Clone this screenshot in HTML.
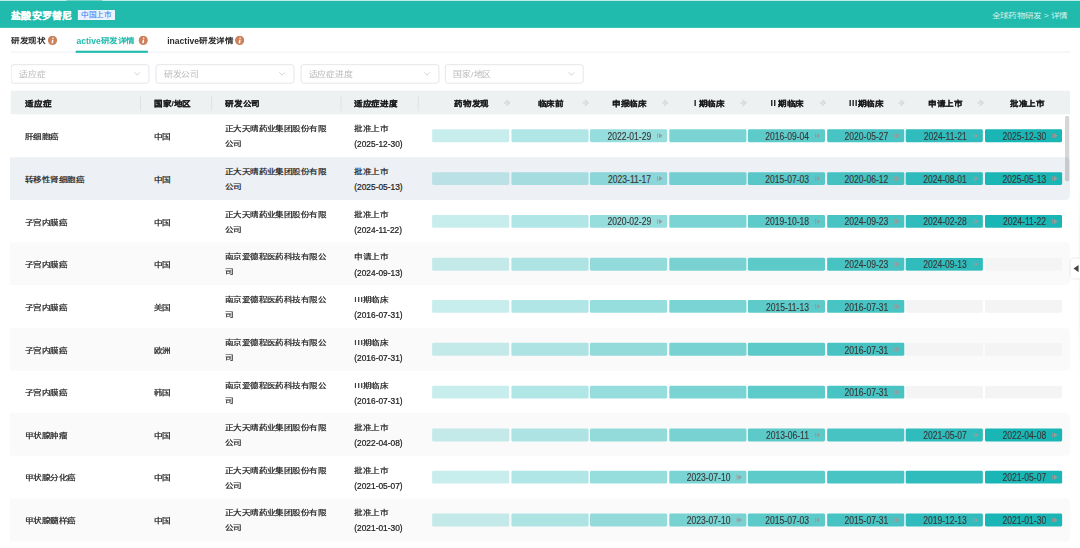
<!DOCTYPE html><html lang="zh-CN"><head><meta charset="utf-8"><style>
*{box-sizing:border-box;margin:0;padding:0}
html,body{width:1080px;height:548px;overflow:hidden;background:#fff}
body{font-family:"Liberation Sans",sans-serif;color:#333}
#root{position:absolute;left:0;top:0;width:1512px;height:768px;transform:scale(0.7142857142857143);transform-origin:0 0;overflow:hidden}
.a{position:absolute;white-space:nowrap}
.hdr{left:0;top:1.4px;width:1512px;height:37.8px;background:rgb(32,187,172)}
.topseg{left:92.75px;top:0;width:50px;height:1.4px;background:#6fd0c6}
.title{left:15.5px;top:12.2px;font-size:14px;font-weight:bold;color:#fff;line-height:20px;letter-spacing:0.35px;-webkit-text-stroke:0.3px #fff}
.badge{left:109.2px;top:14px;height:13.7px;width:51.8px;background:#ebf1fd;color:#3d85f5;font-size:10.6px;-webkit-text-stroke:0.15px #3d85f5;line-height:13.7px;text-align:center}
.badge span{display:inline-block;transform:scaleY(0.86);transform-origin:50% 55%}
.crumb{right:17.5px;top:13.5px;font-size:12px;letter-spacing:-0.3px;color:rgba(255,255,255,.82);line-height:16px}
.tab{top:48.9px;font-size:12px;font-weight:bold;line-height:16px;color:#2b2b2b}
.tab.on{color:rgb(32,187,172)}
.info{width:12.6px;height:12.6px;border-radius:50%;background:#c9835c;color:#fff;font-size:9px;font-weight:bold;text-align:center;line-height:12.6px;font-family:"Liberation Serif",serif}
.tabline{left:15.4px;top:71.6px;width:1482.6px;height:2px;background:#f2f4f7}
.tabul{left:106.4px;top:71.3px;width:100.4px;height:2.4px;background:rgb(32,187,172)}
.sel{top:90.2px;width:194px;height:27px;border:1px solid #d9dce3;border-radius:4px;background:#fff}
.sel span{position:absolute;left:10.5px;top:5px;font-size:12.4px;letter-spacing:0.3px;line-height:16px;color:#bdbdbd;-webkit-text-stroke:0.1px #bdbdbd}
.sel svg{position:absolute;right:11px;top:9px}
.thead{left:15.4px;top:126.6px;width:1482.6px;height:33px;background:#edf1f2}
.th{top:136.9px;font-size:12px;font-weight:bold;line-height:16px;color:#1a1a1a;-webkit-text-stroke:0.2px #1a1a1a}
.sep{top:134px;width:1.4px;height:20.6px;background:#d9dde0}
.row{left:14.2px;width:1483.8px;border-radius:0 6px 6px 0}
.td{font-size:12px;line-height:21px;color:#222;letter-spacing:-0.15px;-webkit-text-stroke:0.35px #222}
.cj{transform:scaleY(0.86);transform-origin:0 55%}
.cjs{display:inline-block;transform:scaleY(0.86);transform-origin:0 55%}
.bar{height:18px;border-radius:2px}
.bar .d{position:absolute;right:22.5px;top:1.5px;font-size:14px;line-height:16px;color:#383838;-webkit-text-stroke:0.2px #383838;transform:scaleX(0.855);transform-origin:100% 50%}
.bar svg{position:absolute;right:6.2px;top:5px}
</style></head><body><div id="root"><div class="a topseg"></div>
<div class="a hdr"></div>
<div class="a title cj">盐酸安罗替尼</div>
<div class="a badge"><span>中国上市</span></div>
<div class="a crumb cj">全球药物研发 &gt; 详情</div>
<div class="a tab" style="left:15.6px"><span class="cjs">研发现状</span></div>
<div class="a" style="left:66.8px;top:50.4px;line-height:0"><svg width="13" height="13" viewBox="0 0 13 13"><circle cx="6.5" cy="6.5" r="6.5" fill="#cd825c"/><circle cx="7.1" cy="3.6" r="1.1" fill="#fff"/><path d="M5.8 5.5 L7.8 5.5 L7.3 10.4 L5.1 10.4 Z" fill="#fff"/></svg></div>
<div class="a tab on" style="left:107.0px">active<span class="cjs">研发详情</span></div>
<div class="a" style="left:193.9px;top:50.4px;line-height:0"><svg width="13" height="13" viewBox="0 0 13 13"><circle cx="6.5" cy="6.5" r="6.5" fill="#cd825c"/><circle cx="7.1" cy="3.6" r="1.1" fill="#fff"/><path d="M5.8 5.5 L7.8 5.5 L7.3 10.4 L5.1 10.4 Z" fill="#fff"/></svg></div>
<div class="a tab" style="left:234.0px">inactive<span class="cjs">研发详情</span></div>
<div class="a" style="left:329px;top:50.4px;line-height:0"><svg width="13" height="13" viewBox="0 0 13 13"><circle cx="6.5" cy="6.5" r="6.5" fill="#cd825c"/><circle cx="7.1" cy="3.6" r="1.1" fill="#fff"/><path d="M5.8 5.5 L7.8 5.5 L7.3 10.4 L5.1 10.4 Z" fill="#fff"/></svg></div>
<div class="a tabline"></div>
<div class="a tabul"></div>
<div class="a sel" style="left:15.4px"><span class="cj">适应症</span><svg width="10" height="7" viewBox="0 0 10 7"><path d="M1 1.2 L5 5.2 L9 1.2" fill="none" stroke="#c8c8c8" stroke-width="1.1"/></svg></div>
<div class="a sel" style="left:218.0px"><span class="cj">研发公司</span><svg width="10" height="7" viewBox="0 0 10 7"><path d="M1 1.2 L5 5.2 L9 1.2" fill="none" stroke="#c8c8c8" stroke-width="1.1"/></svg></div>
<div class="a sel" style="left:420.59999999999997px"><span class="cj">适应症进度</span><svg width="10" height="7" viewBox="0 0 10 7"><path d="M1 1.2 L5 5.2 L9 1.2" fill="none" stroke="#c8c8c8" stroke-width="1.1"/></svg></div>
<div class="a sel" style="left:623.1999999999999px"><span class="cj">国家/地区</span><svg width="10" height="7" viewBox="0 0 10 7"><path d="M1 1.2 L5 5.2 L9 1.2" fill="none" stroke="#c8c8c8" stroke-width="1.1"/></svg></div>
<div class="a thead"></div>
<div class="a th cj" style="left:35.6px">适应症</div>
<div class="a th cj" style="left:216px">国家/地区</div>
<div class="a th cj" style="left:315.5px">研发公司</div>
<div class="a th cj" style="left:496px">适应症进度</div>
<div class="a sep" style="left:195.70000000000002px"></div>
<div class="a sep" style="left:295.7px"></div>
<div class="a sep" style="left:477.1px"></div>
<div class="a sep" style="left:585.0999999999999px"></div>
<div class="a th cj" style="left:600.2px;width:120px;text-align:center">药物发现</div>
<div class="a" style="left:704.8px;top:139.2px;line-height:0"><svg width="10" height="10" viewBox="0 0 10 10"><path d="M3.6 1 L8.4 5 L3.6 9" fill="none" stroke="#d2d4d6" stroke-width="1.5"/><path d="M0.6 5 L6 5" fill="none" stroke="#d2d4d6" stroke-width="1.5"/></svg></div>
<div class="a th cj" style="left:710.7px;width:120px;text-align:center">临床前</div>
<div class="a" style="left:815.3px;top:139.2px;line-height:0"><svg width="10" height="10" viewBox="0 0 10 10"><path d="M3.6 1 L8.4 5 L3.6 9" fill="none" stroke="#d2d4d6" stroke-width="1.5"/><path d="M0.6 5 L6 5" fill="none" stroke="#d2d4d6" stroke-width="1.5"/></svg></div>
<div class="a th cj" style="left:821.2px;width:120px;text-align:center">申报临床</div>
<div class="a" style="left:925.8px;top:139.2px;line-height:0"><svg width="10" height="10" viewBox="0 0 10 10"><path d="M3.6 1 L8.4 5 L3.6 9" fill="none" stroke="#d2d4d6" stroke-width="1.5"/><path d="M0.6 5 L6 5" fill="none" stroke="#d2d4d6" stroke-width="1.5"/></svg></div>
<div class="a th" style="left:932.9000000000001px;width:120px;text-align:center"><span style="letter-spacing:0.8px"></span>I<span style="display:inline-block;width:3.2px"></span><span class="cjs">期临床</span></div>
<div class="a" style="left:1036.3000000000002px;top:139.2px;line-height:0"><svg width="10" height="10" viewBox="0 0 10 10"><path d="M3.6 1 L8.4 5 L3.6 9" fill="none" stroke="#d2d4d6" stroke-width="1.5"/><path d="M0.6 5 L6 5" fill="none" stroke="#d2d4d6" stroke-width="1.5"/></svg></div>
<div class="a th" style="left:1042.2px;width:120px;text-align:center"><span style="letter-spacing:0.8px">I</span>I<span style="display:inline-block;width:3.2px"></span><span class="cjs">期临床</span></div>
<div class="a" style="left:1146.8000000000002px;top:139.2px;line-height:0"><svg width="10" height="10" viewBox="0 0 10 10"><path d="M3.6 1 L8.4 5 L3.6 9" fill="none" stroke="#d2d4d6" stroke-width="1.5"/><path d="M0.6 5 L6 5" fill="none" stroke="#d2d4d6" stroke-width="1.5"/></svg></div>
<div class="a th" style="left:1152.7px;width:120px;text-align:center"><span style="letter-spacing:0.8px">II</span>I<span style="display:inline-block;width:0.6px"></span><span class="cjs">期临床</span></div>
<div class="a" style="left:1257.3000000000002px;top:139.2px;line-height:0"><svg width="10" height="10" viewBox="0 0 10 10"><path d="M3.6 1 L8.4 5 L3.6 9" fill="none" stroke="#d2d4d6" stroke-width="1.5"/><path d="M0.6 5 L6 5" fill="none" stroke="#d2d4d6" stroke-width="1.5"/></svg></div>
<div class="a th cj" style="left:1263.2px;width:120px;text-align:center">申请上市</div>
<div class="a" style="left:1367.8000000000002px;top:139.2px;line-height:0"><svg width="10" height="10" viewBox="0 0 10 10"><path d="M3.6 1 L8.4 5 L3.6 9" fill="none" stroke="#d2d4d6" stroke-width="1.5"/><path d="M0.6 5 L6 5" fill="none" stroke="#d2d4d6" stroke-width="1.5"/></svg></div>
<div class="a th cj" style="left:1378.2px;width:120px;text-align:center">批准上市</div>
<div class="a td cj" style="left:35px;top:181.175px">肝细胞癌</div>
<div class="a td cj" style="left:215.5px;top:181.175px">中国</div>
<div class="a td cj" style="left:314.5px;top:170.175px">正大天晴药业集团股份有限</div>
<div class="a td cj" style="left:314.5px;top:191.07500000000002px">公司</div>
<div class="a td cj" style="left:496px;top:170.175px">批准上市</div>
<div class="a td" style="left:496px;top:191.47500000000002px;font-size:13px;letter-spacing:0;transform:scaleX(0.9);transform-origin:0 50%">(2025-12-30)</div>
<div class="a bar" style="left:605.0px;top:181.275px;width:108.4px;background:rgba(26,181,181,0.24)"></div>
<div class="a bar" style="left:715.5px;top:181.275px;width:108.4px;background:rgba(26,181,181,0.34)"></div>
<div class="a bar" style="left:826.0px;top:181.275px;width:108.4px;background:rgba(26,181,181,0.46)"><span class="d">2022-01-29</span><svg width="8" height="8" viewBox="0 0 8 8"><rect x="0" y="0.5" width="1.3" height="7" fill="#9a9a9a"/><path d="M2.6 0.5 L7.6 4 L2.6 7.5 Z" fill="#9a9a9a"/></svg></div>
<div class="a bar" style="left:936.5px;top:181.275px;width:108.4px;background:rgba(26,181,181,0.58)"></div>
<div class="a bar" style="left:1047.0px;top:181.275px;width:108.4px;background:rgba(26,181,181,0.7)"><span class="d">2016-09-04</span><svg width="8" height="8" viewBox="0 0 8 8"><rect x="0" y="0.5" width="1.3" height="7" fill="#9a9a9a"/><path d="M2.6 0.5 L7.6 4 L2.6 7.5 Z" fill="#9a9a9a"/></svg></div>
<div class="a bar" style="left:1157.5px;top:181.275px;width:108.4px;background:rgba(26,181,181,0.8)"><span class="d">2020-05-27</span><svg width="8" height="8" viewBox="0 0 8 8"><rect x="0" y="0.5" width="1.3" height="7" fill="#9a9a9a"/><path d="M2.6 0.5 L7.6 4 L2.6 7.5 Z" fill="#9a9a9a"/></svg></div>
<div class="a bar" style="left:1268.0px;top:181.275px;width:108.4px;background:rgba(26,181,181,0.9)"><span class="d">2024-11-21</span><svg width="8" height="8" viewBox="0 0 8 8"><rect x="0" y="0.5" width="1.3" height="7" fill="#9a9a9a"/><path d="M2.6 0.5 L7.6 4 L2.6 7.5 Z" fill="#9a9a9a"/></svg></div>
<div class="a bar" style="left:1378.5px;top:181.275px;width:108.4px;background:rgba(26,181,181,1.0)"><span class="d">2025-12-30</span><svg width="8" height="8" viewBox="0 0 8 8"><rect x="0" y="0.5" width="1.3" height="7" fill="#9a9a9a"/><path d="M2.6 0.5 L7.6 4 L2.6 7.5 Z" fill="#9a9a9a"/></svg></div>
<div class="a row" style="top:219.75px;height:59.75px;background:#edf0f5"></div>
<div class="a td cj" style="left:35px;top:240.925px">转移性肾细胞癌</div>
<div class="a td cj" style="left:215.5px;top:240.925px">中国</div>
<div class="a td cj" style="left:314.5px;top:229.925px">正大天晴药业集团股份有限</div>
<div class="a td cj" style="left:314.5px;top:250.82500000000002px">公司</div>
<div class="a td cj" style="left:496px;top:229.925px">批准上市</div>
<div class="a td" style="left:496px;top:251.22500000000002px;font-size:13px;letter-spacing:0;transform:scaleX(0.9);transform-origin:0 50%">(2025-05-13)</div>
<div class="a bar" style="left:605.0px;top:241.025px;width:108.4px;background:rgba(26,181,181,0.24)"></div>
<div class="a bar" style="left:715.5px;top:241.025px;width:108.4px;background:rgba(26,181,181,0.34)"></div>
<div class="a bar" style="left:826.0px;top:241.025px;width:108.4px;background:rgba(26,181,181,0.46)"><span class="d">2023-11-17</span><svg width="8" height="8" viewBox="0 0 8 8"><rect x="0" y="0.5" width="1.3" height="7" fill="#9a9a9a"/><path d="M2.6 0.5 L7.6 4 L2.6 7.5 Z" fill="#9a9a9a"/></svg></div>
<div class="a bar" style="left:936.5px;top:241.025px;width:108.4px;background:rgba(26,181,181,0.58)"></div>
<div class="a bar" style="left:1047.0px;top:241.025px;width:108.4px;background:rgba(26,181,181,0.7)"><span class="d">2015-07-03</span><svg width="8" height="8" viewBox="0 0 8 8"><rect x="0" y="0.5" width="1.3" height="7" fill="#9a9a9a"/><path d="M2.6 0.5 L7.6 4 L2.6 7.5 Z" fill="#9a9a9a"/></svg></div>
<div class="a bar" style="left:1157.5px;top:241.025px;width:108.4px;background:rgba(26,181,181,0.8)"><span class="d">2020-06-12</span><svg width="8" height="8" viewBox="0 0 8 8"><rect x="0" y="0.5" width="1.3" height="7" fill="#9a9a9a"/><path d="M2.6 0.5 L7.6 4 L2.6 7.5 Z" fill="#9a9a9a"/></svg></div>
<div class="a bar" style="left:1268.0px;top:241.025px;width:108.4px;background:rgba(26,181,181,0.9)"><span class="d">2024-08-01</span><svg width="8" height="8" viewBox="0 0 8 8"><rect x="0" y="0.5" width="1.3" height="7" fill="#9a9a9a"/><path d="M2.6 0.5 L7.6 4 L2.6 7.5 Z" fill="#9a9a9a"/></svg></div>
<div class="a bar" style="left:1378.5px;top:241.025px;width:108.4px;background:rgba(26,181,181,1.0)"><span class="d">2025-05-13</span><svg width="8" height="8" viewBox="0 0 8 8"><rect x="0" y="0.5" width="1.3" height="7" fill="#9a9a9a"/><path d="M2.6 0.5 L7.6 4 L2.6 7.5 Z" fill="#9a9a9a"/></svg></div>
<div class="a td cj" style="left:35px;top:300.675px">子宫内膜癌</div>
<div class="a td cj" style="left:215.5px;top:300.675px">中国</div>
<div class="a td cj" style="left:314.5px;top:289.675px">正大天晴药业集团股份有限</div>
<div class="a td cj" style="left:314.5px;top:310.575px">公司</div>
<div class="a td cj" style="left:496px;top:289.675px">批准上市</div>
<div class="a td" style="left:496px;top:310.975px;font-size:13px;letter-spacing:0;transform:scaleX(0.9);transform-origin:0 50%">(2024-11-22)</div>
<div class="a bar" style="left:605.0px;top:300.775px;width:108.4px;background:rgba(26,181,181,0.24)"></div>
<div class="a bar" style="left:715.5px;top:300.775px;width:108.4px;background:rgba(26,181,181,0.34)"></div>
<div class="a bar" style="left:826.0px;top:300.775px;width:108.4px;background:rgba(26,181,181,0.46)"><span class="d">2020-02-29</span><svg width="8" height="8" viewBox="0 0 8 8"><rect x="0" y="0.5" width="1.3" height="7" fill="#9a9a9a"/><path d="M2.6 0.5 L7.6 4 L2.6 7.5 Z" fill="#9a9a9a"/></svg></div>
<div class="a bar" style="left:936.5px;top:300.775px;width:108.4px;background:rgba(26,181,181,0.58)"></div>
<div class="a bar" style="left:1047.0px;top:300.775px;width:108.4px;background:rgba(26,181,181,0.7)"><span class="d">2019-10-18</span><svg width="8" height="8" viewBox="0 0 8 8"><rect x="0" y="0.5" width="1.3" height="7" fill="#9a9a9a"/><path d="M2.6 0.5 L7.6 4 L2.6 7.5 Z" fill="#9a9a9a"/></svg></div>
<div class="a bar" style="left:1157.5px;top:300.775px;width:108.4px;background:rgba(26,181,181,0.8)"><span class="d">2024-09-23</span><svg width="8" height="8" viewBox="0 0 8 8"><rect x="0" y="0.5" width="1.3" height="7" fill="#9a9a9a"/><path d="M2.6 0.5 L7.6 4 L2.6 7.5 Z" fill="#9a9a9a"/></svg></div>
<div class="a bar" style="left:1268.0px;top:300.775px;width:108.4px;background:rgba(26,181,181,0.9)"><span class="d">2024-02-28</span><svg width="8" height="8" viewBox="0 0 8 8"><rect x="0" y="0.5" width="1.3" height="7" fill="#9a9a9a"/><path d="M2.6 0.5 L7.6 4 L2.6 7.5 Z" fill="#9a9a9a"/></svg></div>
<div class="a bar" style="left:1378.5px;top:300.775px;width:108.4px;background:rgba(26,181,181,1.0)"><span class="d">2024-11-22</span><svg width="8" height="8" viewBox="0 0 8 8"><rect x="0" y="0.5" width="1.3" height="7" fill="#9a9a9a"/><path d="M2.6 0.5 L7.6 4 L2.6 7.5 Z" fill="#9a9a9a"/></svg></div>
<div class="a row" style="top:339.25px;height:59.75px;background:#fafafa"></div>
<div class="a td cj" style="left:35px;top:360.425px">子宫内膜癌</div>
<div class="a td cj" style="left:215.5px;top:360.425px">中国</div>
<div class="a td cj" style="left:314.5px;top:349.425px">南京爱德程医药科技有限公</div>
<div class="a td cj" style="left:314.5px;top:370.325px">司</div>
<div class="a td cj" style="left:496px;top:349.425px">申请上市</div>
<div class="a td" style="left:496px;top:370.725px;font-size:13px;letter-spacing:0;transform:scaleX(0.9);transform-origin:0 50%">(2024-09-13)</div>
<div class="a bar" style="left:605.0px;top:360.525px;width:108.4px;background:rgba(26,181,181,0.24)"></div>
<div class="a bar" style="left:715.5px;top:360.525px;width:108.4px;background:rgba(26,181,181,0.34)"></div>
<div class="a bar" style="left:826.0px;top:360.525px;width:108.4px;background:rgba(26,181,181,0.46)"></div>
<div class="a bar" style="left:936.5px;top:360.525px;width:108.4px;background:rgba(26,181,181,0.58)"></div>
<div class="a bar" style="left:1047.0px;top:360.525px;width:108.4px;background:rgba(26,181,181,0.7)"></div>
<div class="a bar" style="left:1157.5px;top:360.525px;width:108.4px;background:rgba(26,181,181,0.8)"><span class="d">2024-09-23</span><svg width="8" height="8" viewBox="0 0 8 8"><rect x="0" y="0.5" width="1.3" height="7" fill="#9a9a9a"/><path d="M2.6 0.5 L7.6 4 L2.6 7.5 Z" fill="#9a9a9a"/></svg></div>
<div class="a bar" style="left:1268.0px;top:360.525px;width:108.4px;background:rgba(26,181,181,0.9)"><span class="d">2024-09-13</span><svg width="8" height="8" viewBox="0 0 8 8"><rect x="0" y="0.5" width="1.3" height="7" fill="#9a9a9a"/><path d="M2.6 0.5 L7.6 4 L2.6 7.5 Z" fill="#9a9a9a"/></svg></div>
<div class="a bar" style="left:1378.5px;top:360.525px;width:108.4px;background:#f4f4f4"></div>
<div class="a td cj" style="left:35px;top:420.175px">子宫内膜癌</div>
<div class="a td cj" style="left:215.5px;top:420.175px">美国</div>
<div class="a td cj" style="left:314.5px;top:409.175px">南京爱德程医药科技有限公</div>
<div class="a td cj" style="left:314.5px;top:430.075px">司</div>
<div class="a td" style="left:496px;top:409.175px"><span class="cjs"><span style="letter-spacing:1px">II</span>I期临床</span></div>
<div class="a td" style="left:496px;top:430.475px;font-size:13px;letter-spacing:0;transform:scaleX(0.9);transform-origin:0 50%">(2016-07-31)</div>
<div class="a bar" style="left:605.0px;top:420.275px;width:108.4px;background:rgba(26,181,181,0.24)"></div>
<div class="a bar" style="left:715.5px;top:420.275px;width:108.4px;background:rgba(26,181,181,0.34)"></div>
<div class="a bar" style="left:826.0px;top:420.275px;width:108.4px;background:rgba(26,181,181,0.46)"></div>
<div class="a bar" style="left:936.5px;top:420.275px;width:108.4px;background:rgba(26,181,181,0.58)"></div>
<div class="a bar" style="left:1047.0px;top:420.275px;width:108.4px;background:rgba(26,181,181,0.7)"><span class="d">2015-11-13</span><svg width="8" height="8" viewBox="0 0 8 8"><rect x="0" y="0.5" width="1.3" height="7" fill="#9a9a9a"/><path d="M2.6 0.5 L7.6 4 L2.6 7.5 Z" fill="#9a9a9a"/></svg></div>
<div class="a bar" style="left:1157.5px;top:420.275px;width:108.4px;background:rgba(26,181,181,0.8)"><span class="d">2016-07-31</span><svg width="8" height="8" viewBox="0 0 8 8"><rect x="0" y="0.5" width="1.3" height="7" fill="#9a9a9a"/><path d="M2.6 0.5 L7.6 4 L2.6 7.5 Z" fill="#9a9a9a"/></svg></div>
<div class="a bar" style="left:1268.0px;top:420.275px;width:108.4px;background:#f4f4f4"></div>
<div class="a bar" style="left:1378.5px;top:420.275px;width:108.4px;background:#f4f4f4"></div>
<div class="a row" style="top:458.75px;height:59.75px;background:#fafafa"></div>
<div class="a td cj" style="left:35px;top:479.925px">子宫内膜癌</div>
<div class="a td cj" style="left:215.5px;top:479.925px">欧洲</div>
<div class="a td cj" style="left:314.5px;top:468.925px">南京爱德程医药科技有限公</div>
<div class="a td cj" style="left:314.5px;top:489.825px">司</div>
<div class="a td" style="left:496px;top:468.925px"><span class="cjs"><span style="letter-spacing:1px">II</span>I期临床</span></div>
<div class="a td" style="left:496px;top:490.225px;font-size:13px;letter-spacing:0;transform:scaleX(0.9);transform-origin:0 50%">(2016-07-31)</div>
<div class="a bar" style="left:605.0px;top:480.025px;width:108.4px;background:rgba(26,181,181,0.24)"></div>
<div class="a bar" style="left:715.5px;top:480.025px;width:108.4px;background:rgba(26,181,181,0.34)"></div>
<div class="a bar" style="left:826.0px;top:480.025px;width:108.4px;background:rgba(26,181,181,0.46)"></div>
<div class="a bar" style="left:936.5px;top:480.025px;width:108.4px;background:rgba(26,181,181,0.58)"></div>
<div class="a bar" style="left:1047.0px;top:480.025px;width:108.4px;background:rgba(26,181,181,0.7)"></div>
<div class="a bar" style="left:1157.5px;top:480.025px;width:108.4px;background:rgba(26,181,181,0.8)"><span class="d">2016-07-31</span><svg width="8" height="8" viewBox="0 0 8 8"><rect x="0" y="0.5" width="1.3" height="7" fill="#9a9a9a"/><path d="M2.6 0.5 L7.6 4 L2.6 7.5 Z" fill="#9a9a9a"/></svg></div>
<div class="a bar" style="left:1268.0px;top:480.025px;width:108.4px;background:#f4f4f4"></div>
<div class="a bar" style="left:1378.5px;top:480.025px;width:108.4px;background:#f4f4f4"></div>
<div class="a td cj" style="left:35px;top:539.675px">子宫内膜癌</div>
<div class="a td cj" style="left:215.5px;top:539.675px">韩国</div>
<div class="a td cj" style="left:314.5px;top:528.675px">南京爱德程医药科技有限公</div>
<div class="a td cj" style="left:314.5px;top:549.5749999999999px">司</div>
<div class="a td" style="left:496px;top:528.675px"><span class="cjs"><span style="letter-spacing:1px">II</span>I期临床</span></div>
<div class="a td" style="left:496px;top:549.9749999999999px;font-size:13px;letter-spacing:0;transform:scaleX(0.9);transform-origin:0 50%">(2016-07-31)</div>
<div class="a bar" style="left:605.0px;top:539.775px;width:108.4px;background:rgba(26,181,181,0.24)"></div>
<div class="a bar" style="left:715.5px;top:539.775px;width:108.4px;background:rgba(26,181,181,0.34)"></div>
<div class="a bar" style="left:826.0px;top:539.775px;width:108.4px;background:rgba(26,181,181,0.46)"></div>
<div class="a bar" style="left:936.5px;top:539.775px;width:108.4px;background:rgba(26,181,181,0.58)"></div>
<div class="a bar" style="left:1047.0px;top:539.775px;width:108.4px;background:rgba(26,181,181,0.7)"></div>
<div class="a bar" style="left:1157.5px;top:539.775px;width:108.4px;background:rgba(26,181,181,0.8)"><span class="d">2016-07-31</span><svg width="8" height="8" viewBox="0 0 8 8"><rect x="0" y="0.5" width="1.3" height="7" fill="#9a9a9a"/><path d="M2.6 0.5 L7.6 4 L2.6 7.5 Z" fill="#9a9a9a"/></svg></div>
<div class="a bar" style="left:1268.0px;top:539.775px;width:108.4px;background:#f4f4f4"></div>
<div class="a bar" style="left:1378.5px;top:539.775px;width:108.4px;background:#f4f4f4"></div>
<div class="a row" style="top:578.25px;height:59.75px;background:#fafafa"></div>
<div class="a td cj" style="left:35px;top:599.425px">甲状腺肿瘤</div>
<div class="a td cj" style="left:215.5px;top:599.425px">中国</div>
<div class="a td cj" style="left:314.5px;top:588.425px">正大天晴药业集团股份有限</div>
<div class="a td cj" style="left:314.5px;top:609.3249999999999px">公司</div>
<div class="a td cj" style="left:496px;top:588.425px">批准上市</div>
<div class="a td" style="left:496px;top:609.7249999999999px;font-size:13px;letter-spacing:0;transform:scaleX(0.9);transform-origin:0 50%">(2022-04-08)</div>
<div class="a bar" style="left:605.0px;top:599.525px;width:108.4px;background:rgba(26,181,181,0.24)"></div>
<div class="a bar" style="left:715.5px;top:599.525px;width:108.4px;background:rgba(26,181,181,0.34)"></div>
<div class="a bar" style="left:826.0px;top:599.525px;width:108.4px;background:rgba(26,181,181,0.46)"></div>
<div class="a bar" style="left:936.5px;top:599.525px;width:108.4px;background:rgba(26,181,181,0.58)"></div>
<div class="a bar" style="left:1047.0px;top:599.525px;width:108.4px;background:rgba(26,181,181,0.7)"><span class="d">2013-06-11</span><svg width="8" height="8" viewBox="0 0 8 8"><rect x="0" y="0.5" width="1.3" height="7" fill="#9a9a9a"/><path d="M2.6 0.5 L7.6 4 L2.6 7.5 Z" fill="#9a9a9a"/></svg></div>
<div class="a bar" style="left:1157.5px;top:599.525px;width:108.4px;background:rgba(26,181,181,0.8)"></div>
<div class="a bar" style="left:1268.0px;top:599.525px;width:108.4px;background:rgba(26,181,181,0.9)"><span class="d">2021-05-07</span><svg width="8" height="8" viewBox="0 0 8 8"><rect x="0" y="0.5" width="1.3" height="7" fill="#9a9a9a"/><path d="M2.6 0.5 L7.6 4 L2.6 7.5 Z" fill="#9a9a9a"/></svg></div>
<div class="a bar" style="left:1378.5px;top:599.525px;width:108.4px;background:rgba(26,181,181,1.0)"><span class="d">2022-04-08</span><svg width="8" height="8" viewBox="0 0 8 8"><rect x="0" y="0.5" width="1.3" height="7" fill="#9a9a9a"/><path d="M2.6 0.5 L7.6 4 L2.6 7.5 Z" fill="#9a9a9a"/></svg></div>
<div class="a td cj" style="left:35px;top:659.175px">甲状腺分化癌</div>
<div class="a td cj" style="left:215.5px;top:659.175px">中国</div>
<div class="a td cj" style="left:314.5px;top:648.175px">正大天晴药业集团股份有限</div>
<div class="a td cj" style="left:314.5px;top:669.0749999999999px">公司</div>
<div class="a td cj" style="left:496px;top:648.175px">批准上市</div>
<div class="a td" style="left:496px;top:669.4749999999999px;font-size:13px;letter-spacing:0;transform:scaleX(0.9);transform-origin:0 50%">(2021-05-07)</div>
<div class="a bar" style="left:605.0px;top:659.275px;width:108.4px;background:rgba(26,181,181,0.24)"></div>
<div class="a bar" style="left:715.5px;top:659.275px;width:108.4px;background:rgba(26,181,181,0.34)"></div>
<div class="a bar" style="left:826.0px;top:659.275px;width:108.4px;background:rgba(26,181,181,0.46)"></div>
<div class="a bar" style="left:936.5px;top:659.275px;width:108.4px;background:rgba(26,181,181,0.58)"><span class="d">2023-07-10</span><svg width="8" height="8" viewBox="0 0 8 8"><rect x="0" y="0.5" width="1.3" height="7" fill="#9a9a9a"/><path d="M2.6 0.5 L7.6 4 L2.6 7.5 Z" fill="#9a9a9a"/></svg></div>
<div class="a bar" style="left:1047.0px;top:659.275px;width:108.4px;background:rgba(26,181,181,0.7)"></div>
<div class="a bar" style="left:1157.5px;top:659.275px;width:108.4px;background:rgba(26,181,181,0.8)"></div>
<div class="a bar" style="left:1268.0px;top:659.275px;width:108.4px;background:rgba(26,181,181,0.9)"></div>
<div class="a bar" style="left:1378.5px;top:659.275px;width:108.4px;background:rgba(26,181,181,1.0)"><span class="d">2021-05-07</span><svg width="8" height="8" viewBox="0 0 8 8"><rect x="0" y="0.5" width="1.3" height="7" fill="#9a9a9a"/><path d="M2.6 0.5 L7.6 4 L2.6 7.5 Z" fill="#9a9a9a"/></svg></div>
<div class="a row" style="top:697.75px;height:59.75px;background:#fafafa"></div>
<div class="a td cj" style="left:35px;top:718.925px">甲状腺髓样癌</div>
<div class="a td cj" style="left:215.5px;top:718.925px">中国</div>
<div class="a td cj" style="left:314.5px;top:707.925px">正大天晴药业集团股份有限</div>
<div class="a td cj" style="left:314.5px;top:728.8249999999999px">公司</div>
<div class="a td cj" style="left:496px;top:707.925px">批准上市</div>
<div class="a td" style="left:496px;top:729.2249999999999px;font-size:13px;letter-spacing:0;transform:scaleX(0.9);transform-origin:0 50%">(2021-01-30)</div>
<div class="a bar" style="left:605.0px;top:719.025px;width:108.4px;background:rgba(26,181,181,0.24)"></div>
<div class="a bar" style="left:715.5px;top:719.025px;width:108.4px;background:rgba(26,181,181,0.34)"></div>
<div class="a bar" style="left:826.0px;top:719.025px;width:108.4px;background:rgba(26,181,181,0.46)"></div>
<div class="a bar" style="left:936.5px;top:719.025px;width:108.4px;background:rgba(26,181,181,0.58)"><span class="d">2023-07-10</span><svg width="8" height="8" viewBox="0 0 8 8"><rect x="0" y="0.5" width="1.3" height="7" fill="#9a9a9a"/><path d="M2.6 0.5 L7.6 4 L2.6 7.5 Z" fill="#9a9a9a"/></svg></div>
<div class="a bar" style="left:1047.0px;top:719.025px;width:108.4px;background:rgba(26,181,181,0.7)"><span class="d">2015-07-03</span><svg width="8" height="8" viewBox="0 0 8 8"><rect x="0" y="0.5" width="1.3" height="7" fill="#9a9a9a"/><path d="M2.6 0.5 L7.6 4 L2.6 7.5 Z" fill="#9a9a9a"/></svg></div>
<div class="a bar" style="left:1157.5px;top:719.025px;width:108.4px;background:rgba(26,181,181,0.8)"><span class="d">2015-07-31</span><svg width="8" height="8" viewBox="0 0 8 8"><rect x="0" y="0.5" width="1.3" height="7" fill="#9a9a9a"/><path d="M2.6 0.5 L7.6 4 L2.6 7.5 Z" fill="#9a9a9a"/></svg></div>
<div class="a bar" style="left:1268.0px;top:719.025px;width:108.4px;background:rgba(26,181,181,0.9)"><span class="d">2019-12-13</span><svg width="8" height="8" viewBox="0 0 8 8"><rect x="0" y="0.5" width="1.3" height="7" fill="#9a9a9a"/><path d="M2.6 0.5 L7.6 4 L2.6 7.5 Z" fill="#9a9a9a"/></svg></div>
<div class="a bar" style="left:1378.5px;top:719.025px;width:108.4px;background:rgba(26,181,181,1.0)"><span class="d">2021-01-30</span><svg width="8" height="8" viewBox="0 0 8 8"><rect x="0" y="0.5" width="1.3" height="7" fill="#9a9a9a"/><path d="M2.6 0.5 L7.6 4 L2.6 7.5 Z" fill="#9a9a9a"/></svg></div>
<div class="a" style="left:1491px;top:162.4px;width:5.6px;height:92px;border-radius:3px;background:rgba(0,0,0,.16)"></div>
<div class="a" style="left:1510px;top:240px;width:2px;height:290px;background:linear-gradient(to bottom,rgba(0,0,0,0),rgba(0,0,0,.035) 25%,rgba(0,0,0,.035) 75%,rgba(0,0,0,0))"></div>
<div class="a" style="left:1499px;top:362px;width:14px;height:28px;background:#fff;border-radius:5px 0 0 5px;box-shadow:0 0 3px rgba(0,0,0,.18)"></div>
<div class="a" style="left:1503px;top:370.7px;width:0;height:0;border-top:5.5px solid transparent;border-bottom:5.5px solid transparent;border-right:7px solid #444"></div></div></body></html>
